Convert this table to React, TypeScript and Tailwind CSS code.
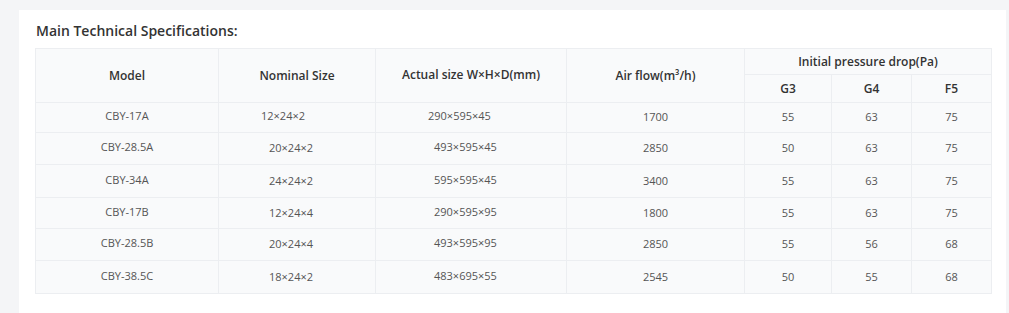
import React from "react";

const rows = [
  { model: "CBY-17A", nominal: "12×24×2", actual: "290×595×45", air: "1700", g3: "55", g4: "63", f5: "75", first: true, h: "h-[30px]" },
  { model: "CBY-28.5A", nominal: "20×24×2", actual: "493×595×45", air: "2850", g3: "50", g4: "63", f5: "75", h: "h-[32px]" },
  { model: "CBY-34A", nominal: "24×24×2", actual: "595×595×45", air: "3400", g3: "55", g4: "63", f5: "75", h: "h-[33px]" },
  { model: "CBY-17B", nominal: "12×24×4", actual: "290×595×95", air: "1800", g3: "55", g4: "63", f5: "75", h: "h-[31px]" },
  { model: "CBY-28.5B", nominal: "20×24×4", actual: "493×595×95", air: "2850", g3: "55", g4: "56", f5: "68", h: "h-[32px]" },
  { model: "CBY-38.5C", nominal: "18×24×2", actual: "483×695×55", air: "2545", g3: "50", g4: "55", f5: "68", h: "h-[33px]" },
];

export default function App() {
  return (
    <div
      className="w-[1009px] h-[313px] overflow-hidden bg-[#f4f5f7] pl-[19px] pr-[3px] pt-[10px]"
      style={{ fontFamily: '"Open Sans", "Noto Sans", sans-serif' }}
    >
      <div className="bg-white h-[320px] pl-[16px] pt-[10px]">
        <h2 className="text-[14px] leading-[22px] font-semibold text-[#333] ml-[1px] mb-[6px]">
          Main Technical Specifications:
        </h2>
        <table className="table-fixed border-collapse bg-[#f9fafb] border border-[#eceef1] w-[956px]">
          <colgroup>
            <col className="w-[183px]" />
            <col className="w-[157px]" />
            <col className="w-[191px]" />
            <col className="w-[178px]" />
            <col className="w-[87px]" />
            <col className="w-[80px]" />
            <col className="w-[80px]" />
          </colgroup>
          <thead>
            <tr className="h-[26px]">
              <th rowSpan={2} className="border border-[#eceef1] text-[12px] font-semibold text-[#333] text-center align-middle">
                Model
              </th>
              <th rowSpan={2} className="border border-[#eceef1] text-[12px] font-semibold text-[#333] text-center align-middle">
                Nominal Size
              </th>
              <th rowSpan={2} className="border border-[#eceef1] text-[12px] font-semibold text-[#333] text-center align-middle pb-[2px]">
                Actual size W×H×D(mm)
              </th>
              <th rowSpan={2} className="border border-[#eceef1] text-[12px] font-semibold text-[#333] text-center align-middle">
                Air flow(m³/h)
              </th>
              <th colSpan={3} className="border border-[#eceef1] text-[12px] font-semibold text-[#333] text-center align-middle">
                Initial pressure drop(Pa)
              </th>
            </tr>
            <tr className="h-[28px]">
              <th className="border border-[#eceef1] text-[12px] font-semibold text-[#333] text-center">G3</th>
              <th className="border border-[#eceef1] text-[12px] font-semibold text-[#333] text-center">G4</th>
              <th className="border border-[#eceef1] text-[12px] font-semibold text-[#333] text-center">F5</th>
            </tr>
          </thead>
          <tbody>
            {rows.map((r) => (
              <tr key={r.model} className={`${r.h} text-[11px] text-[#555]`}>
                <td className="border border-[#eceef1] text-center pb-[2px]">{r.model}</td>
                <td className={`border border-[#eceef1] text-left ${r.first ? "pl-[42px] pb-[2px]" : "pl-[50px]"}`}>{r.nominal}</td>
                <td className={`border border-[#eceef1] text-left pb-[2px] ${r.first ? "pl-[52px]" : "pl-[58px]"}`}>{r.actual}</td>
                <td className="border border-[#eceef1] text-center">{r.air}</td>
                <td className="border border-[#eceef1] text-center">{r.g3}</td>
                <td className="border border-[#eceef1] text-center">{r.g4}</td>
                <td className="border border-[#eceef1] text-center">{r.f5}</td>
              </tr>
            ))}
          </tbody>
        </table>
      </div>
    </div>
  );
}
